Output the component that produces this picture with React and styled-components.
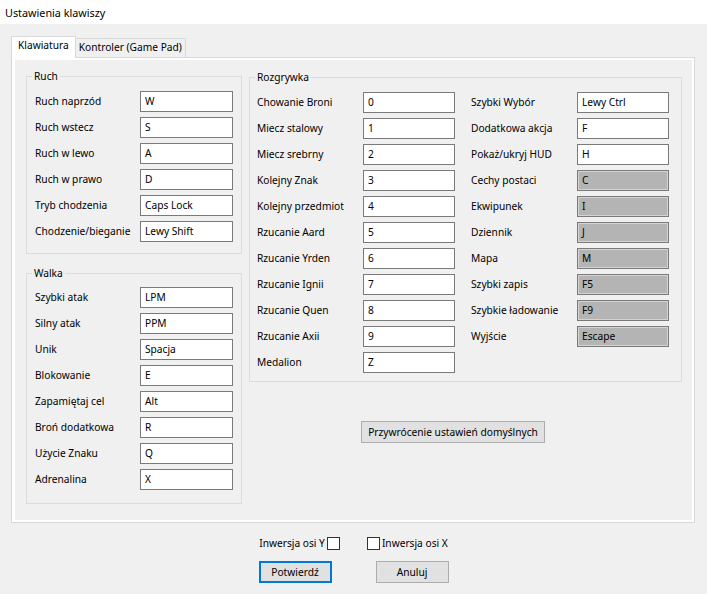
import React from "react";
import styled, { createGlobalStyle } from "styled-components";

const GlobalStyle = createGlobalStyle`
  html, body { margin: 0; padding: 0; background: #f0f0f0; }
  body {
    font-family: "Noto Sans", "Open Sans", sans-serif;
    font-size: 10.2px;
    color: #000;
  }
  * { box-sizing: border-box; }
`;

const Window = styled.div`
  width: 707px;
  height: 594px;
  background: #f0f0f0;
  display: flex;
  flex-direction: column;
  overflow: hidden;
`;

const TitleBar = styled.div`
  height: 24px;
  background: #fff;
  padding-left: 5px;
  font-size: 10.8px;
  line-height: 25px;
`;

const TabStrip = styled.div`
  display: flex;
  align-items: flex-end;
  height: 21px;
  margin: 12px 0 0 11px;
  position: relative;
  z-index: 1;
`;

const Tab = styled.div`
  height: ${(p) => (p.$active ? "22px" : "19px")};
  margin-bottom: ${(p) => (p.$active ? "-1px" : "0")};
  padding: 0 ${(p) => (p.$active ? "6px" : "3px")};
  background: ${(p) => (p.$active ? "#fff" : "#f0f0f0")};
  border: 1px solid #d9d9d9;
  border-bottom: none;
  border-left: ${(p) => (p.$active ? "1px solid #d9d9d9" : "none")};
  line-height: 17px;
  white-space: nowrap;
`;

const Panel = styled.div`
  margin: 0 12px 0 11px;
  height: 466px;
  border: 1px solid #d9d9d9;
  background: #fff;
  padding: 2px 2px 2px 3px;
`;

const Page = styled.div`
  height: 100%;
  background: #f0f0f0;
  display: grid;
  grid-template-columns: 216px 433px;
  column-gap: 7px;
  align-items: start;
  padding: 9px 0 0 11px;
`;

const Column = styled.div`
  display: flex;
  flex-direction: column;
  gap: ${(p) => p.$gap || 0}px;
`;

const Group = styled.fieldset`
  margin: ${(p) => p.$mt || 0}px 0 0 0;
  padding: ${(p) => p.$pt}px ${(p) => p.$pr}px ${(p) => p.$pb}px ${(p) => p.$pl}px;
  border: 1px solid #dcdcdc;
  min-width: 0;
`;

const Legend = styled.legend`
  padding: 0 2px;
  margin-left: ${(p) => p.$ml}px;
  line-height: 14px;
`;

const Rows = styled.div`
  display: flex;
  flex-direction: column;
  gap: 5px;
`;

const Row = styled.div`
  display: grid;
  grid-template-columns: ${(p) => p.$label}px ${(p) => p.$input}px;
  height: 21px;
  align-items: center;
`;

const Label = styled.span`
  line-height: 21px;
  white-space: nowrap;
`;

const KeyBox = styled.div`
  height: 21px;
  border: 1px solid #7a7a7a;
  background: ${(p) => (p.$disabled ? "#b4b4b4" : "#fff")};
  box-shadow: ${(p) => (p.$disabled ? "inset 0 0 0 1px #d4d4d4" : "none")};
  padding-left: 4px;
  line-height: 19px;
  white-space: nowrap;
  overflow: hidden;
`;

const TwoCols = styled.div`
  display: flex;
  gap: 16px;
`;

const Button = styled.button`
  font: inherit;
  color: #000;
  width: ${(p) => p.$w}px;
  height: 22px;
  padding: 0;
  background: #e1e1e1;
  border: ${(p) => (p.$default ? "2px solid #0078d7" : "1px solid #adadad")};
  border-radius: 0;
  line-height: 18px;
  white-space: nowrap;
`;

const ResetWrap = styled.div`
  margin: 39px 0 0 112px;
`;

const CheckRow = styled.div`
  display: flex;
  justify-content: center;
  align-items: center;
  gap: 27px;
  height: 15px;
  margin-top: 13px;
`;

const CheckItem = styled.label`
  display: flex;
  align-items: center;
  gap: 2px;
  line-height: 15px;
`;

const Box = styled.span`
  width: 13px;
  height: 13px;
  border: 1px solid #333;
  background: #fff;
  display: inline-block;
`;

const ButtonRow = styled.div`
  display: flex;
  justify-content: center;
  gap: 44px;
  margin-top: 10px;
`;

const ruch = [
  ["Ruch naprzód", "W"],
  ["Ruch wstecz", "S"],
  ["Ruch w lewo", "A"],
  ["Ruch w prawo", "D"],
  ["Tryb chodzenia", "Caps Lock"],
  ["Chodzenie/bieganie", "Lewy Shift"],
];

const walka = [
  ["Szybki atak", "LPM"],
  ["Silny atak", "PPM"],
  ["Unik", "Spacja"],
  ["Blokowanie", "E"],
  ["Zapamiętaj cel", "Alt"],
  ["Broń dodatkowa", "R"],
  ["Użycie Znaku", "Q"],
  ["Adrenalina", "X"],
];

const roz1 = [
  ["Chowanie Broni", "0"],
  ["Miecz stalowy", "1"],
  ["Miecz srebrny", "2"],
  ["Kolejny Znak", "3"],
  ["Kolejny przedmiot", "4"],
  ["Rzucanie Aard", "5"],
  ["Rzucanie Yrden", "6"],
  ["Rzucanie Ignii", "7"],
  ["Rzucanie Quen", "8"],
  ["Rzucanie Axii", "9"],
  ["Medalion", "Z"],
];

const roz2 = [
  ["Szybki Wybór", "Lewy Ctrl"],
  ["Dodatkowa akcja", "F"],
  ["Pokaż/ukryj HUD", "H"],
  ["Cechy postaci", "C", true],
  ["Ekwipunek", "I", true],
  ["Dziennik", "J", true],
  ["Mapa", "M", true],
  ["Szybki zapis", "F5", true],
  ["Szybkie ładowanie", "F9", true],
  ["Wyjście", "Escape", true],
];

function KeyRows({ items, label, input }) {
  return (
    <Rows>
      {items.map(([name, key, disabled]) => (
        <Row key={name} $label={label} $input={input}>
          <Label>{name}</Label>
          <KeyBox $disabled={disabled}>{key}</KeyBox>
        </Row>
      ))}
    </Rows>
  );
}

export default function App() {
  return (
    <Window>
      <GlobalStyle />
      <TitleBar>Ustawienia klawiszy</TitleBar>
      <TabStrip>
        <Tab $active>Klawiatura</Tab>
        <Tab>Kontroler (Game Pad)</Tab>
      </TabStrip>
      <Panel>
        <Page>
          <Column $gap={12}>
            <Group $pt={8} $pr={8} $pb={11} $pl={8}>
              <Legend $ml={-3}>Ruch</Legend>
              <KeyRows items={ruch} label={105} input={93} />
            </Group>
            <Group $pt={7} $pr={8} $pb={13} $pl={8}>
              <Legend $ml={-3}>Walka</Legend>
              <KeyRows items={walka} label={105} input={93} />
            </Group>
          </Column>
          <Column>
            <Group $mt={1} $pt={8} $pr={12} $pb={8} $pl={7}>
              <Legend $ml={-2}>Rozgrywka</Legend>
              <TwoCols>
                <KeyRows items={roz1} label={106} input={92} />
                <KeyRows items={roz2} label={106} input={92} />
              </TwoCols>
            </Group>
            <ResetWrap>
              <Button $w={184}>Przywrócenie ustawień domyślnych</Button>
            </ResetWrap>
          </Column>
        </Page>
      </Panel>
      <CheckRow>
        <CheckItem>
          Inwersja osi Y <Box />
        </CheckItem>
        <CheckItem>
          <Box /> Inwersja osi X
        </CheckItem>
      </CheckRow>
      <ButtonRow>
        <Button $w={73} $default>Potwierdź</Button>
        <Button $w={73}>Anuluj</Button>
      </ButtonRow>
    </Window>
  );
}
